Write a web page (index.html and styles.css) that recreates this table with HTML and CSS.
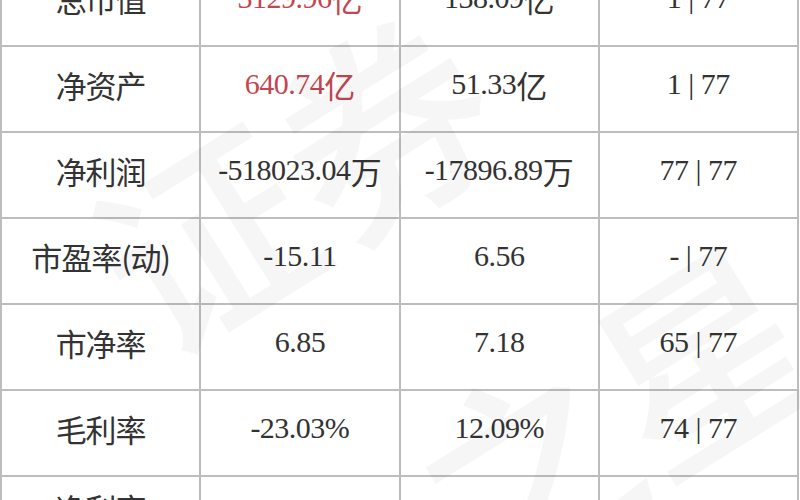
FILE: index.html
```html
<!DOCTYPE html>
<html lang="zh-CN">
<head>
<meta charset="utf-8">
<title>财务指标</title>
<link rel="stylesheet" href="styles.css">
</head>
<body>
<div class="page">
  <div class="grid">
    <div class="cell label">总市值</div>
    <div class="cell num red">3129.96<span class="cjk">亿</span></div>
    <div class="cell num">138.09<span class="cjk">亿</span></div>
    <div class="cell num">1 | 77</div>

    <div class="cell label">净资产</div>
    <div class="cell num red">640.74<span class="cjk">亿</span></div>
    <div class="cell num">51.33<span class="cjk">亿</span></div>
    <div class="cell num">1 | 77</div>

    <div class="cell label">净利润</div>
    <div class="cell num">-518023.04<span class="cjk">万</span></div>
    <div class="cell num">-17896.89<span class="cjk">万</span></div>
    <div class="cell num">77 | 77</div>

    <div class="cell label">市盈率(动)</div>
    <div class="cell num">-15.11</div>
    <div class="cell num">6.56</div>
    <div class="cell num">- | 77</div>

    <div class="cell label">市净率</div>
    <div class="cell num">6.85</div>
    <div class="cell num">7.18</div>
    <div class="cell num">65 | 77</div>

    <div class="cell label">毛利率</div>
    <div class="cell num">-23.03%</div>
    <div class="cell num">12.09%</div>
    <div class="cell num">74 | 77</div>

    <div class="cell label last">净利率</div>
    <div class="cell num low">-8.55%</div>
    <div class="cell num low">3.21%</div>
    <div class="cell num low">74 | 77</div>
  </div>
  <div class="watermark wm-a">证券</div>
  <div class="watermark wm-b">之星</div>
</div>
</body>
</html>
```

FILE: styles.css
```css
html, body {
  margin: 0;
  padding: 0;
  background: #ffffff;
}

.page {
  position: relative;
  width: 800px;
  height: 500px;
  overflow: hidden;
}

.grid {
  display: grid;
  grid-template-columns: repeat(4, 1fr);
  grid-auto-rows: 84px;
  gap: 2px;
  width: 795px;
  padding: 0 2px;
  margin-top: -39px;
  background: #bdbdbd;
}

.cell {
  background: #ffffff;
  display: flex;
  align-items: center;
  justify-content: center;
  padding-bottom: 10px;
  box-sizing: border-box;
  color: #333333;
  white-space: nowrap;
}

.cell.last {
  align-items: flex-start;
  padding-top: 8px;
  padding-bottom: 0;
}

.cell.low {
  padding-bottom: 0;
}

.label {
  font-family: "Noto Sans CJK SC", "Noto Sans", sans-serif;
  font-size: 31px;
  letter-spacing: -1px;
}

.num {
  font-family: "Liberation Serif", "Noto Sans CJK SC", serif;
  font-size: 30px;
  letter-spacing: -0.5px;
}

.cjk {
  font-family: "Noto Sans CJK SC", sans-serif;
  font-size: 31px;
  letter-spacing: 0;
}

.red {
  color: #c3464f;
}

.watermark {
  position: absolute;
  font-family: "Noto Sans CJK SC", sans-serif;
  font-size: 210px;
  font-weight: 500;
  color: rgba(0, 0, 0, 0.035);
  white-space: nowrap;
  pointer-events: none;
  transform: rotate(-32deg);
  transform-origin: center;
  line-height: 1;
}

.wm-a {
  left: 80px;
  top: 70px;
}

.wm-b {
  left: 400px;
  top: 300px;
}
```
